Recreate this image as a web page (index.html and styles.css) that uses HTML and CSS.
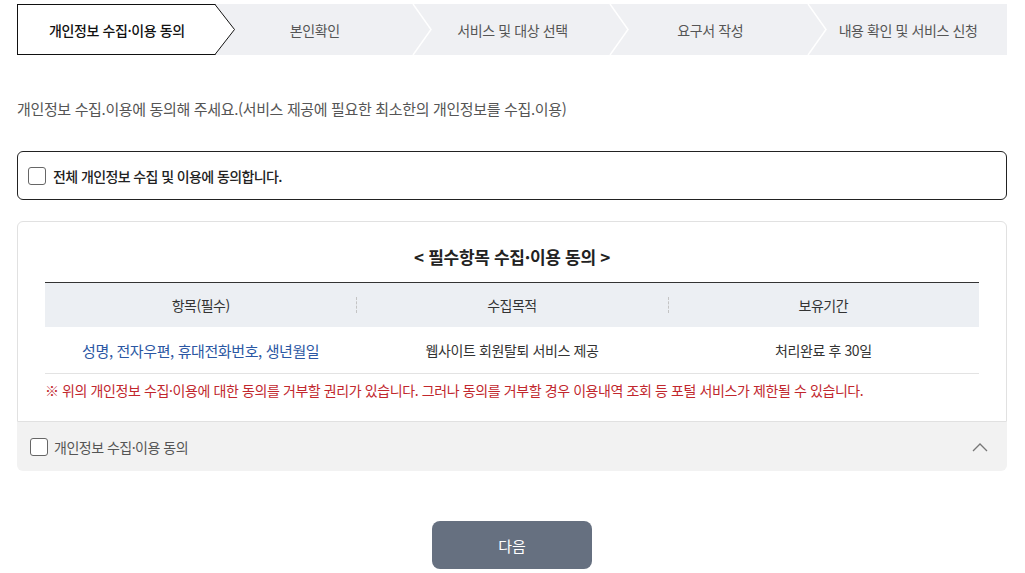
FILE: index.html
```html
<!DOCTYPE html>
<html lang="ko">
<head>
    <meta charset="UTF-8">
    <meta name="viewport" content="width=device-width, initial-scale=1.0">
    <title>개인정보 수집·이용 동의</title>
    <link rel="stylesheet" href="styles.css">
</head>
<body>
    <div class="wrap">
        <!-- 진행 단계 -->
        <ol class="steps">
            <li class="step active">
                <span>개인정보 수집·이용 동의</span>
                <svg class="arrow" width="21" height="51" viewBox="0 0 21 51">
                    <polygon points="0,0 20,25.5 0,51" fill="#fff"/>
                    <polyline points="0,0.5 19.5,25.5 0,50.5" fill="none" stroke="#111" stroke-width="1"/>
                </svg>
            </li>
            <li class="step">
                <span>본인확인</span>
                <svg class="sep" width="21" height="51" viewBox="0 0 21 51">
                    <polyline points="1,0 19,25.5 1,51" fill="none" stroke="#fff" stroke-width="1.5"/>
                </svg>
            </li>
            <li class="step">
                <span>서비스 및 대상 선택</span>
                <svg class="sep" width="21" height="51" viewBox="0 0 21 51">
                    <polyline points="1,0 19,25.5 1,51" fill="none" stroke="#fff" stroke-width="1.5"/>
                </svg>
            </li>
            <li class="step">
                <span>요구서 작성</span>
                <svg class="sep" width="21" height="51" viewBox="0 0 21 51">
                    <polyline points="1,0 19,25.5 1,51" fill="none" stroke="#fff" stroke-width="1.5"/>
                </svg>
            </li>
            <li class="step">
                <span>내용 확인 및 서비스 신청</span>
            </li>
        </ol>

        <p class="intro">개인정보 수집.이용에 동의해 주세요.(서비스 제공에 필요한 최소한의 개인정보를 수집.이용)</p>

        <label class="agree-all">
            <span class="chk"></span>
            <span>전체 개인정보 수집 및 이용에 동의합니다.</span>
        </label>

        <div class="terms">
            <div class="terms-body">
                <h2 class="terms-title">&lt; 필수항목 수집·이용 동의 &gt;</h2>
                <table>
                    <thead>
                        <tr>
                            <th>항목(필수)</th>
                            <th>수집목적</th>
                            <th>보유기간</th>
                        </tr>
                    </thead>
                    <tbody>
                        <tr>
                            <td class="blue">성명, 전자우편, 휴대전화번호, 생년월일</td>
                            <td>웹사이트 회원탈퇴 서비스 제공</td>
                            <td>처리완료 후 30일</td>
                        </tr>
                    </tbody>
                </table>
                <p class="notice">※ 위의 개인정보 수집·이용에 대한 동의를 거부할 권리가 있습니다. 그러나 동의를 거부할 경우 이용내역 조회 등 포털 서비스가 제한될 수 있습니다.</p>
            </div>
            <div class="terms-foot">
                <label class="agree-one">
                    <span class="chk"></span>
                    <span>개인정보 수집·이용 동의</span>
                </label>
                <svg class="toggle" width="16" height="10" viewBox="0 0 16 10">
                    <polyline points="1,9 8,2 15,9" fill="none" stroke="#777" stroke-width="1.3"/>
                </svg>
            </div>
        </div>

        <div class="btns">
            <button class="next-btn">다음</button>
        </div>
    </div>
</body>
</html>
```

FILE: styles.css
```css
body {
    margin: 0;
    font-family: "Noto Sans CJK KR", "Noto Sans", sans-serif;
    color: #333;
    background-color: #fff;
}

.wrap {
    padding: 4px 18px 0 17px;
}

/* 진행 단계 */
.steps {
    display: flex;
    margin: 0;
    padding: 0;
    list-style: none;
    height: 51px;
    background-color: #eff0f3;
}

.step {
    position: relative;
    flex: 1;
    display: flex;
    align-items: center;
    justify-content: center;
    font-size: 14px;
    color: #555;
    letter-spacing: -0.4px;
}

.step.active {
    background-color: #fff;
    border: 1px solid #111;
    border-right: none;
    color: #111;
    font-weight: 500;
    z-index: 2;
}

.step .arrow {
    position: absolute;
    right: -20px;
    top: -1px;
}

.step .sep {
    position: absolute;
    right: -19px;
    top: 0;
    z-index: 1;
}

.intro {
    margin: 43px 0 0;
    font-size: 15px;
    line-height: 22px;
    color: #555;
    letter-spacing: -0.35px;
}

.chk {
    display: inline-block;
    width: 16px;
    height: 16px;
    border: 1px solid #666;
    border-radius: 3px;
    background: #fff;
    flex-shrink: 0;
}

.agree-all {
    display: flex;
    align-items: center;
    gap: 7px;
    margin-top: 31px;
    height: 47px;
    padding: 0 10px;
    border: 1px solid #222;
    border-radius: 6px;
    font-size: 14px;
    font-weight: 500;
    color: #222;
    letter-spacing: -0.6px;
}

/* 약관 */
.terms {
    margin-top: 21px;
}

.terms-body {
    border: 1px solid #e1e1e1;
    border-radius: 6px 6px 0 0;
    padding: 19px 27px 21px;
}

.terms-title {
    margin: 0;
    text-align: center;
    font-size: 17px;
    font-weight: bold;
    line-height: 32px;
    color: #222;
    letter-spacing: -0.3px;
}

table {
    width: 100%;
    margin-top: 9px;
    border-collapse: collapse;
    table-layout: fixed;
}

th {
    position: relative;
    height: 42px;
    background-color: #eceff3;
    border-top: 1px solid #333;
    font-size: 14px;
    font-weight: normal;
    color: #333;
    letter-spacing: -0.5px;
}

th + th::before {
    content: "";
    position: absolute;
    left: 0;
    top: 14px;
    height: 16px;
    border-left: 1px dashed #c4c4c4;
}

td {
    height: 44px;
    text-align: center;
    font-size: 14px;
    color: #333;
    border-bottom: 1px solid #e3e3e3;
    letter-spacing: -0.4px;
}

td.blue {
    font-size: 15px;
    color: #2b57a3;
}

.notice {
    margin: 6px 0 0;
    font-size: 14px;
    line-height: 20px;
    color: #c1272d;
    letter-spacing: -0.4px;
}

.terms-foot {
    display: flex;
    align-items: center;
    justify-content: space-between;
    height: 49px;
    padding: 0 19px 0 13px;
    background-color: #f2f2f2;
    border-radius: 0 0 6px 6px;
}

.agree-one {
    display: flex;
    align-items: center;
    gap: 6px;
    font-size: 14px;
    color: #555;
    letter-spacing: -0.5px;
}

.btns {
    display: flex;
    justify-content: center;
    margin-top: 50px;
}

.next-btn {
    width: 160px;
    height: 48px;
    background-color: #667080;
    color: #fff;
    border: none;
    border-radius: 8px;
    font-family: inherit;
    font-size: 15px;
    cursor: pointer;
}
```
